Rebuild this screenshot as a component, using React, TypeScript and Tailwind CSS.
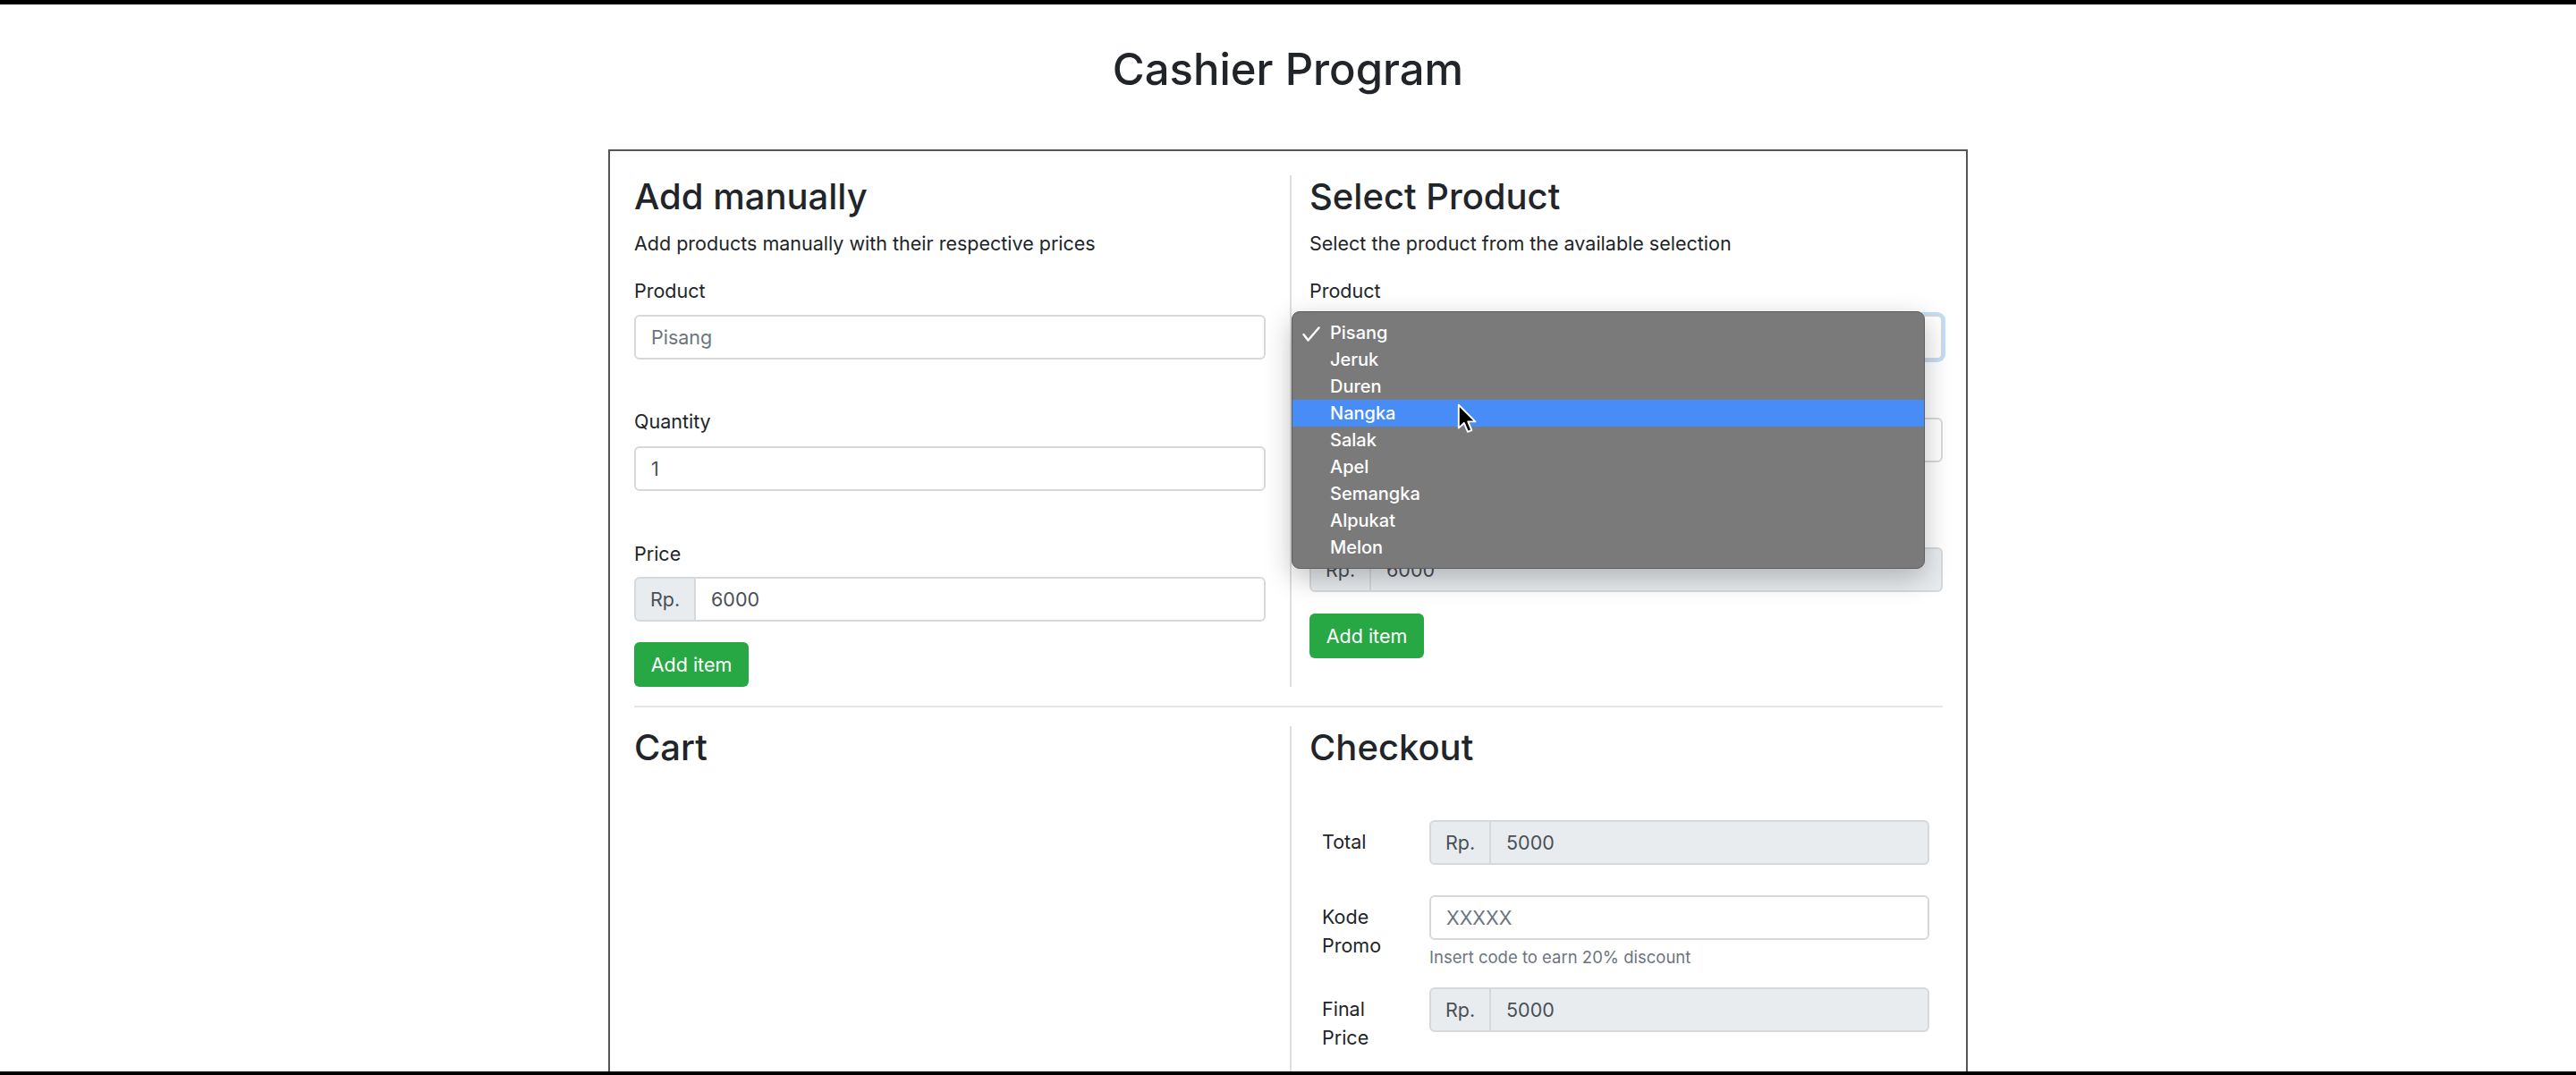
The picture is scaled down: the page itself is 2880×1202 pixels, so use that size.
import React from 'react'

const fruits = ['Pisang', 'Jeruk', 'Duren', 'Nangka', 'Salak', 'Apel', 'Semangka', 'Alpukat', 'Melon']

const Cursor = () => (
  <svg width="24" height="36" viewBox="0 0 20 30" className="absolute left-[184px] top-[4px]">
    <path d="M1.5 1.5 L1.5 23 L6.5 18.3 L10 26.5 L13.6 25 L10.2 17 L17 17 Z" fill="#000" stroke="#fff" strokeWidth="1.6" strokeLinejoin="round" />
  </svg>
)

const Check = () => (
  <svg width="20" height="17" viewBox="0 0 20 17" className="absolute left-[11px] top-[8px]">
    <path d="M1.5 9 L6.5 15.5 L18.5 1.5" fill="none" stroke="#fff" strokeWidth="2.4" strokeLinecap="round" strokeLinejoin="round" />
  </svg>
)

const Dropdown = () => (
  <div className="absolute left-[-20px] top-[-4px] z-10 w-[708px] rounded-[9px] border border-[#5c5c5c] bg-[#7a7a7a] py-[8px] shadow-[0_10px_30px_rgba(0,0,0,0.25)]">
    {fruits.map((f, i) => (
      <div
        key={f}
        className={`relative h-[30px] pl-[42px] text-[20px] leading-[30px] font-medium text-white ${i === 3 ? 'bg-[#478cf7]' : ''}`}
      >
        {i === 0 && <Check />}
        {f}
        {i === 3 && <Cursor />}
      </div>
    ))}
  </div>
)

const Label = ({ children, className = '' }: { children: React.ReactNode; className?: string }) => (
  <div className={`text-[21.5px] leading-[33px] text-[#212529] ${className}`}>{children}</div>
)

const Input = ({ value, placeholder, className = '', disabled = false }: { value?: string; placeholder?: string; className?: string; disabled?: boolean }) => (
  <div
    className={`flex h-[50px] items-center rounded-[6px] border-2 border-[#d6d9dc] px-[17px] text-[21.5px] ${disabled ? 'bg-[#e9ecef]' : 'bg-white'} ${className}`}
  >
    {value ? <span className="text-[#495057]">{value}</span> : <span className="text-[#6c757d]">{placeholder}</span>}
  </div>
)

const RpGroup = ({ value, className = '', disabled = false }: { value: string; className?: string; disabled?: boolean }) => (
  <div className={`flex h-[50px] text-[21.5px] ${className}`}>
    <div className="flex w-[69px] items-center justify-center rounded-l-[6px] border-2 border-[#d6d9dc] bg-[#e9ecef] text-[#495057]">Rp.</div>
    <div className={`flex flex-1 items-center rounded-r-[6px] border-2 border-l-0 border-[#d6d9dc] px-[17px] text-[#495057] ${disabled ? 'bg-[#e9ecef]' : 'bg-white'}`}>
      {value}
    </div>
  </div>
)

const Button = ({ className = '' }: { className?: string }) => (
  <div className={`flex h-[50px] w-[128px] items-center justify-center rounded-[6px] bg-[#28a745] text-[21.5px] text-white ${className}`}>Add item</div>
)

const Heading = ({ children }: { children: React.ReactNode }) => (
  <h3 className="text-[40px] leading-[48px] font-medium text-[#212529]">{children}</h3>
)

export default function App() {
  return (
    <div className="h-[1202px] w-full overflow-hidden border-t-[5px] border-b-[4px] border-black bg-white font-[Inter,sans-serif] text-[#212529]">
      <h1 className="pt-[40px] text-center text-[49px] leading-[65px] font-medium">Cashier Program</h1>

      <div className="mx-auto mt-[57px] w-[1520px] border-2 border-[#555] pt-[27px] pl-[27px] pr-[26px]">
        {/* top row */}
        <div className="flex">
          <div className="w-[733px] pr-[27px]">
            <Heading>Add manually</Heading>
            <Label className="mt-[12px]">Add products manually with their respective prices</Label>
            <Label className="mt-[20px]">Product</Label>
            <Input placeholder="Pisang" className="mt-[10px]" />
            <Label className="mt-[53px]">Quantity</Label>
            <Input value="1" className="mt-[11px]" />
            <Label className="mt-[54px]">Price</Label>
            <RpGroup value="6000" className="mt-[9px]" />
            <Button className="mt-[23px]" />
          </div>
          <div className="flex-1 border-l-2 border-[#dedede] pl-[20px]">
            <Heading>Select Product</Heading>
            <Label className="mt-[12px]">Select the product from the available selection</Label>
            <Label className="mt-[20px]">Product</Label>
            <div className="relative mt-[10px]">
              <Input value="Pisang" className="border-[#80bdff] shadow-[0_0_0_3px_rgba(0,123,255,0.25)]" />
              <Dropdown />
            </div>
            <Label className="mt-[19px]">Quantity</Label>
            <Input value="1" className="mt-[13px] h-[49px]" />
            <Label className="mt-[52px]">Price</Label>
            <RpGroup value="6000" disabled className="mt-[10px]" />
            <Button className="mt-[24px]" />
          </div>
        </div>

        <div className="mt-[21px] h-[2px] bg-[#e6e6e6]" />

        {/* bottom row */}
        <div className="mt-[21px] flex">
          <div className="w-[733px] pr-[27px]">
            <Heading>Cart</Heading>
          </div>
          <div className="flex-1 border-l-2 border-[#dedede] pl-[20px] pb-[200px]">
            <Heading>Checkout</Heading>
            <div className="mt-[57px] flex">
              <div className="w-[134px] pl-[14px] pt-[8px] text-[21.5px] leading-[32px]">Total</div>
              <RpGroup value="5000" disabled className="mr-[15px] flex-1" />
            </div>
            <div className="mt-[34px] flex">
              <div className="w-[134px] pl-[14px] pt-[8px] text-[21.5px] leading-[32px]">
                Kode
                <br />
                Promo
              </div>
              <div className="mr-[15px] flex-1">
                <Input placeholder="XXXXX" className="h-[48px]" />
                <div className="mt-[6px] text-[18.5px] leading-[27px] text-[#6c757d]">Insert code to earn 20% discount</div>
              </div>
            </div>
            <div className="mt-[20px] flex">
              <div className="w-[134px] pl-[14px] pt-[8px] text-[21.5px] leading-[32px]">
                Final
                <br />
                Price
              </div>
              <RpGroup value="5000" disabled className="mr-[15px] flex-1" />
            </div>
          </div>
        </div>
      </div>
    </div>
  )
}
